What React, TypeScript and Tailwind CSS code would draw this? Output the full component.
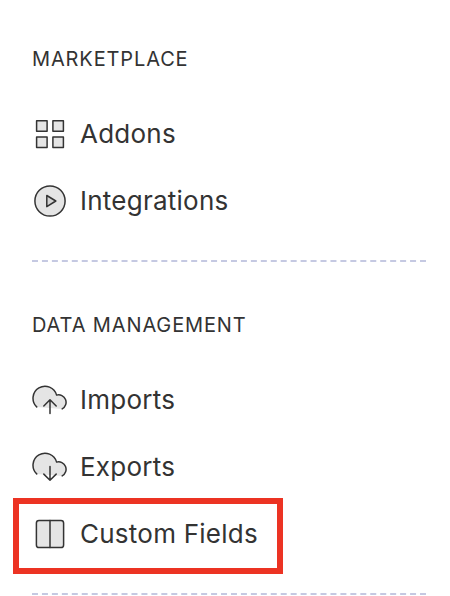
import type { ReactNode } from 'react';

type Item = {
  label: string;
  icon: ReactNode;
  highlighted?: boolean;
};

type Section = {
  title: string;
  items: Item[];
};

// Shared frame so that all icons have the same size and stroke
function Icon({ children }: { children: ReactNode }) {
  return (
    <svg
      className="h-[34px] w-9 shrink-0 fill-[#e5e5e5] stroke-[#333333]"
      viewBox="0 0 36 34"
      strokeWidth="1.5"
      strokeLinecap="round"
      strokeLinejoin="round"
    >
      {children}
    </svg>
  );
}

const cloud = 'M4.7 23.9A12 12 0 1 1 24.6 12.1A7.5 7.5 0 0 1 30.2 25.9';

const sections: Section[] = [
  {
    title: 'MARKETPLACE',
    items: [
      {
        label: 'Addons',
        icon: (
          <Icon>
            <rect x="4.6" y="3.7" width="10.5" height="10.5" />
            <rect x="20.9" y="3.7" width="10.5" height="10.5" />
            <rect x="4.6" y="20" width="10.5" height="10.5" />
            <rect x="20.9" y="20" width="10.5" height="10.5" />
          </Icon>
        ),
      },
      {
        label: 'Integrations',
        icon: (
          <Icon>
            <circle cx="18" cy="17" r="15.1" />
            <path d="M14.8 11.5L23.8 17L14.8 22.7Z" fill="#d2d2d2" />
          </Icon>
        ),
      },
    ],
  },
  {
    title: 'DATA MANAGEMENT',
    items: [
      {
        label: 'Imports',
        icon: (
          <Icon>
            <path d={cloud} />
            <path d="M18 30.5V16.8M11.8 23L18 16.8L24.2 23" fill="none" />
          </Icon>
        ),
      },
      {
        label: 'Exports',
        icon: (
          <Icon>
            <path d={cloud} />
            <path d="M18 16.5V30.3M11.8 24.1L18 30.3L24.2 24.1" fill="none" />
          </Icon>
        ),
      },
      {
        label: 'Custom Fields',
        highlighted: true,
        icon: (
          <Icon>
            <rect x="4.4" y="3.4" width="27.2" height="27.2" rx="2.6" />
            <path d="M18 3.4V30.6" />
          </Icon>
        ),
      },
    ],
  },
];

export default function App() {
  return (
    <nav className="h-[596px] w-[450px] overflow-hidden bg-white pt-[46px] pr-6 pl-8 font-['Inter',sans-serif] text-[#333333]">
      {sections.map((section) => (
        <section key={section.title} className="mb-[50px]">
          <h2 className="text-[20px] leading-[26px] tracking-[0.87px]">{section.title}</h2>

          <ul className="mt-[45px] mb-[42px] flex flex-col gap-[33px]">
            {section.items.map((item) => (
              <li key={item.label} className="relative flex h-[34px] items-center gap-3">
                {item.icon}
                <span className="text-[26px] leading-[34px] tracking-[0.24px] whitespace-nowrap">{item.label}</span>
                {item.highlighted && (
                  <div className="absolute -top-[19px] -left-[19px] h-[76px] w-[270px] border-6 border-[#ec3323]" />
                )}
              </li>
            ))}
          </ul>

          {/* Divider */}
          <div className="border-t-2 border-dashed border-[#c5c9e2]" />
        </section>
      ))}
    </nav>
  );
}
